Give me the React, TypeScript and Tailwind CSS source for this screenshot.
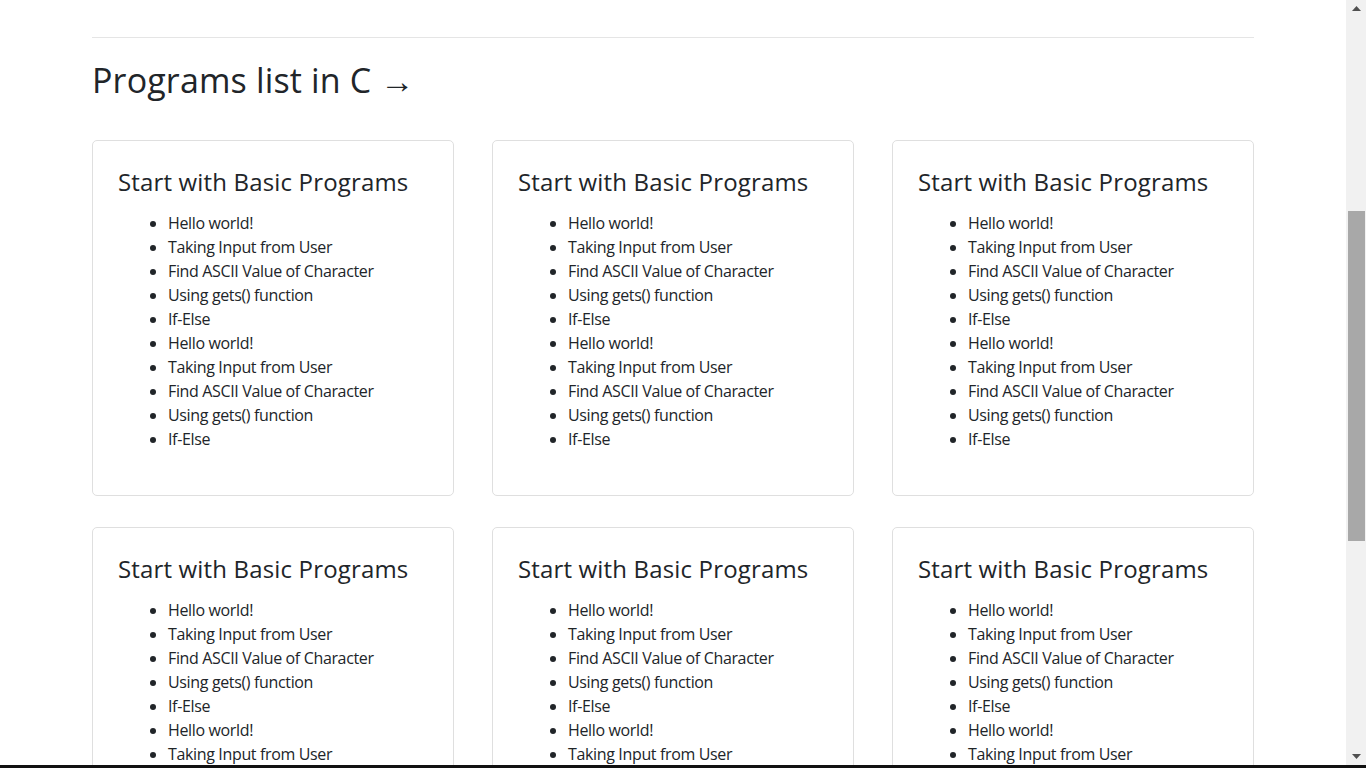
const items = [
  "Hello world!",
  "Taking Input from User",
  "Find ASCII Value of Character",
  "Using gets() function",
  "If-Else",
  "Hello world!",
  "Taking Input from User",
  "Find ASCII Value of Character",
  "Using gets() function",
  "If-Else",
];

function ProgramCard() {
  return (
    <div className="rounded-[5px] border border-[#dfdfdf] bg-white px-6 pb-6 pt-[26px]">
      <h3 className="mb-[15px] pl-[1px] text-[24px] font-medium leading-[29px] tracking-[0.16px]">
        Start with Basic Programs
      </h3>
      <ul className="mb-5 list-disc pl-[51px] text-base leading-6 tracking-[-0.35px]">
        {items.map((item, i) => (
          <li key={i}>{item}</li>
        ))}
      </ul>
    </div>
  );
}

function Scrollbar() {
  return (
    <aside className="flex h-full w-[20px] shrink-0 flex-col bg-[#f1f1f1]">
      <div className="flex h-[17px] items-center justify-center pl-[1px]">
        <svg width="9" height="5" viewBox="0 0 9 5">
          <path d="M0 5 L4.5 0 L9 5 Z" fill="#505050" />
        </svg>
      </div>
      <div className="h-[194px]" />
      <div className="ml-[2px] mr-[1px] h-[330px] bg-[#a8a8a8]" />
      <div className="flex-1" />
      <div className="flex h-[17px] items-center justify-center pl-[1px]">
        <svg width="9" height="5" viewBox="0 0 9 5">
          <path d="M0 0 L9 0 L4.5 5 Z" fill="#505050" />
        </svg>
      </div>
    </aside>
  );
}

export default function App() {
  return (
    <div
      className="flex h-[768px] w-full flex-col overflow-hidden bg-white text-[#212529]"
      style={{ fontFamily: '"Open Sans", "Noto Sans", sans-serif' }}
    >
      <div className="flex min-h-0 flex-1">
        <main className="min-w-0 flex-1 overflow-hidden">
          <div className="mx-auto w-[1162px] pt-[37px]">
            <hr className="border-t border-[#e5e5e5]" />
            <h1 className="mt-[22px] text-[34px] font-medium leading-[41px] tracking-[0.15px]">
              Programs list in C →
            </h1>
            <div className="mt-[39px] grid grid-cols-3 gap-x-[38px] gap-y-[31px]">
              {Array.from({ length: 6 }).map((_, i) => (
                <ProgramCard key={i} />
              ))}
            </div>
          </div>
        </main>
        <Scrollbar />
      </div>
      <div className="h-[3px] w-full shrink-0 bg-[#111]" />
    </div>
  );
}
